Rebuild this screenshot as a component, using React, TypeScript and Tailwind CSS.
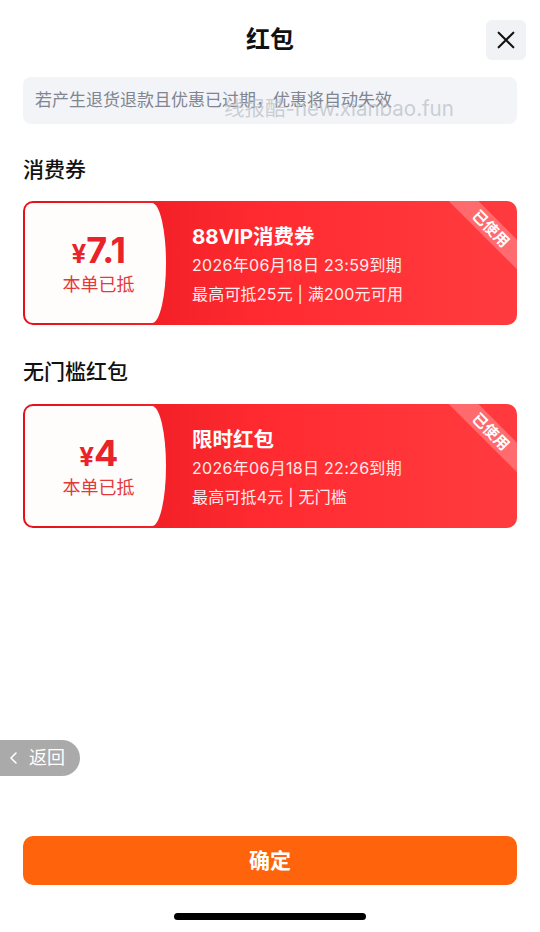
import React from 'react';

interface Coupon {
  amount: string;
  title: string;
  expire: string;
  rule: string;
}

const FONT = 'Inter, "Noto Sans CJK SC", "Noto Sans", sans-serif';

function CouponCard({ amount, title, expire, rule }: Coupon) {
  return (
    <div className="relative flex h-[124px] overflow-hidden rounded-[10px] bg-gradient-to-r from-[#e5101a] via-[#ff2b31] to-[#ff3b3f] p-[2px]">
      {/* white left part with arc edge */}
      <div className="flex w-[141px] shrink-0 flex-col items-center justify-center rounded-l-[8px] rounded-r-[14px_60px] bg-[#fffcfc] pl-[6px]">
        <div className="flex items-baseline font-bold leading-none text-[#e8232a]">
          <span className="text-[26px]">¥</span>
          <span className="text-[36px] tracking-[-0.5px]">{amount}</span>
        </div>
        <div className="mt-[8px] text-[18px] leading-none text-[#e23a3a]">本单已抵</div>
      </div>

      <div className="flex flex-col pl-[26px] pt-[21px] text-white">
        <div className="text-[20.5px] font-bold leading-[26px]">{title}</div>
        <div className="mt-[4px] text-[16px] leading-[22px] tracking-[0.3px] text-[#ffecec]">{expire}</div>
        <div className="mt-[7px] text-[16px] leading-[22px] tracking-[0.2px] text-[#ffecec]">{rule}</div>
      </div>

      {/* used ribbon */}
      <div className="absolute right-[-34px] top-[17px] flex h-[21px] w-[120px] rotate-45 items-center justify-center bg-white/25">
        <span className="text-[15px] font-bold leading-none text-white">已使用</span>
      </div>
    </div>
  );
}

export default function App() {
  return (
    <div
      className="relative flex h-[932px] w-[540px] flex-col overflow-hidden bg-white"
      style={{ fontFamily: FONT }}
    >
      {/* header */}
      <div className="grid grid-cols-[40px_1fr_40px] items-center px-[14px] pt-[20px]">
        <div />
        <div className="text-center text-[24px] font-bold leading-[40px] text-[#111]">红包</div>
        <button className="flex h-[40px] w-[40px] items-center justify-center rounded-[6px] bg-[#f0f2f5]">
          <svg width="22" height="22" viewBox="0 0 24 24" fill="none" stroke="#111" strokeWidth="2.2" strokeLinecap="round">
            <path d="M4 4L20 20M20 4L4 20" />
          </svg>
        </button>
      </div>

      <div className="px-[23px]">
        <div className="relative mt-[17px] flex h-[47px] items-center rounded-[8px] bg-[#f2f4f7] px-[12px]">
          <span className="text-[17px] leading-none text-[#80858f]">若产生退货退款且优惠已过期，优惠将自动失效</span>
          <span className="absolute left-[201px] top-[22px] text-[20.5px] leading-none text-[#b9bcc4]/70">线报酷-new.xianbao.fun</span>
        </div>

        <div className="mt-[31px] text-[21px] font-medium leading-[30px] text-[#111]">消费券</div>
        <div className="mt-[16px]">
          <CouponCard
            amount="7.1"
            title="88VIP消费券"
            expire="2026年06月18日 23:59到期"
            rule="最高可抵25元 | 满200元可用"
          />
        </div>

        <div className="mt-[32px] text-[21px] font-medium leading-[30px] text-[#111]">无门槛红包</div>
        <div className="mt-[17px]">
          <CouponCard
            amount="4"
            title="限时红包"
            expire="2026年06月18日 22:26到期"
            rule="最高可抵4元 | 无门槛"
          />
        </div>
      </div>

      {/* floating back pill */}
      <div className="absolute left-0 top-[740px] flex h-[36px] w-[80px] items-center gap-[9px] rounded-r-full bg-[#aaaaaa] pl-[8px] text-white">
        <svg width="12" height="16" viewBox="0 0 12 16" fill="none" stroke="white" strokeWidth="1.6" strokeLinecap="round" strokeLinejoin="round">
          <path d="M8 3L3 8L8 13" />
        </svg>
        <span className="text-[18px] leading-none">返回</span>
      </div>

      <div className="mt-auto px-[23px]">
        <button className="flex h-[49px] w-full items-center justify-center rounded-[10px] bg-[#ff640c] text-[21px] font-bold text-white">
          确定
        </button>
      </div>
      <div className="flex justify-center pb-[12px] pt-[28px]">
        <div className="h-[7px] w-[192px] rounded-full bg-black" />
      </div>
    </div>
  );
}
